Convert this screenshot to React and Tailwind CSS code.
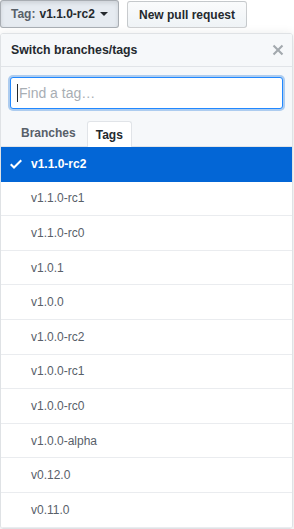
import React from "react";

const tags = [
  "v1.1.0-rc2",
  "v1.1.0-rc1",
  "v1.1.0-rc0",
  "v1.0.1",
  "v1.0.0",
  "v1.0.0-rc2",
  "v1.0.0-rc1",
  "v1.0.0-rc0",
  "v1.0.0-alpha",
  "v0.12.0",
  "v0.11.0",
];

function Check() {
  return (
    <svg viewBox="0 0 12 16" width="12" height="16" className="fill-white">
      <path d="M12 5l-8 8-4-4 1.5-1.5L4 10l6.5-6.5L12 5z" />
    </svg>
  );
}

function Close() {
  return (
    <svg viewBox="0 0 12 16" width="12" height="16" className="fill-[#a3a9ae]">
      <path d="M7.48 8l3.75 3.75-1.48 1.48L6 9.48l-3.75 3.75-1.48-1.48L4.52 8 .77 4.25l1.48-1.48L6 6.52l3.75-3.75 1.48 1.48L7.48 8z" />
    </svg>
  );
}

export default function App() {
  return (
    <div className="w-[294px] h-[529px] overflow-hidden bg-white font-['Liberation_Sans',Arial,sans-serif] text-[#24292e]">
      <div className="flex items-start gap-[8px]">
        <div className="h-[28px] w-[119px] flex items-center pl-[10px] border border-[rgba(27,31,35,0.3)] rounded-[3px] bg-[#e6ebf1] shadow-[inset_0_2px_4px_rgba(27,31,35,0.12)] text-[12px] font-bold leading-[20px]">
          <span className="text-[#586069]">Tag:</span>
          <span className="ml-[4px] text-[#24292e]">v1.1.0-rc2</span>
          <span className="ml-[5px] w-0 h-0 border-t-[4px] border-t-[#24292e] border-x-[4px] border-x-transparent"></span>
        </div>
        <div className="mt-[1px] h-[27px] w-[120px] flex items-center justify-center border border-[rgba(27,31,35,0.2)] rounded-[3px] bg-gradient-to-b from-[#fafbfc] to-[#eff3f6] text-[12px] font-bold leading-[20px] text-[#24292e]">
          New pull request
        </div>
      </div>

      <div className="mt-[5px] w-[293px] border border-[#dfe2e5] rounded-[3px] overflow-hidden shadow-[0_3px_12px_rgba(27,31,35,0.15)]">
        <div className="h-[33px] flex items-center justify-between pl-[10px] pr-[8px] bg-[#f6f8fa] border-b border-[#e1e4e8]">
          <span className="text-[12.3px] font-bold text-[#24292e]">Switch branches/tags</span>
          <Close />
        </div>
        <div className="bg-[#f6f8fa]">
          <div className="pt-[10px] px-[9px]">
            <div className="h-[32px] flex items-center bg-white border border-[#2188ff] rounded-[3px] shadow-[0_0_0_2px_rgba(3,102,214,0.3)] pl-[6px]">
              <span className="w-px h-[18px] bg-[#24292e]"></span>
              <span className="ml-px text-[14px] text-[#a8aeb4]">Find a tag…</span>
            </div>
          </div>
          <div className="mt-[12px] flex items-end pl-[10px] border-b border-[#e1e4e8] h-[26px]">
            <div className="h-[26px] flex items-center px-[9px] border border-transparent text-[12px] font-bold text-[#586069]">
              Branches
            </div>
            <div className="ml-[1px] -mb-px h-[26px] flex items-center px-[8px] bg-white border border-b-0 border-[#e1e4e8] rounded-t-[3px] text-[12px] font-bold text-[#24292e]">
              Tags
            </div>
          </div>
        </div>
        <div>
          {tags.map((t, i) =>
            i === 0 ? (
              <div key={t} className="h-[34.6px] flex items-center bg-[#0366d6] border-b border-[#0366d6] text-white text-[12px] font-bold">
                <span className="w-[30px] pl-[9px] flex items-center"><Check /></span>
                <span>{t}</span>
              </div>
            ) : (
              <div key={t} className="h-[34.6px] flex items-center border-b border-[#eaecef] text-[12px] text-[#586069] pl-[30px]">
                {t}
              </div>
            )
          )}
        </div>
      </div>
    </div>
  );
}
